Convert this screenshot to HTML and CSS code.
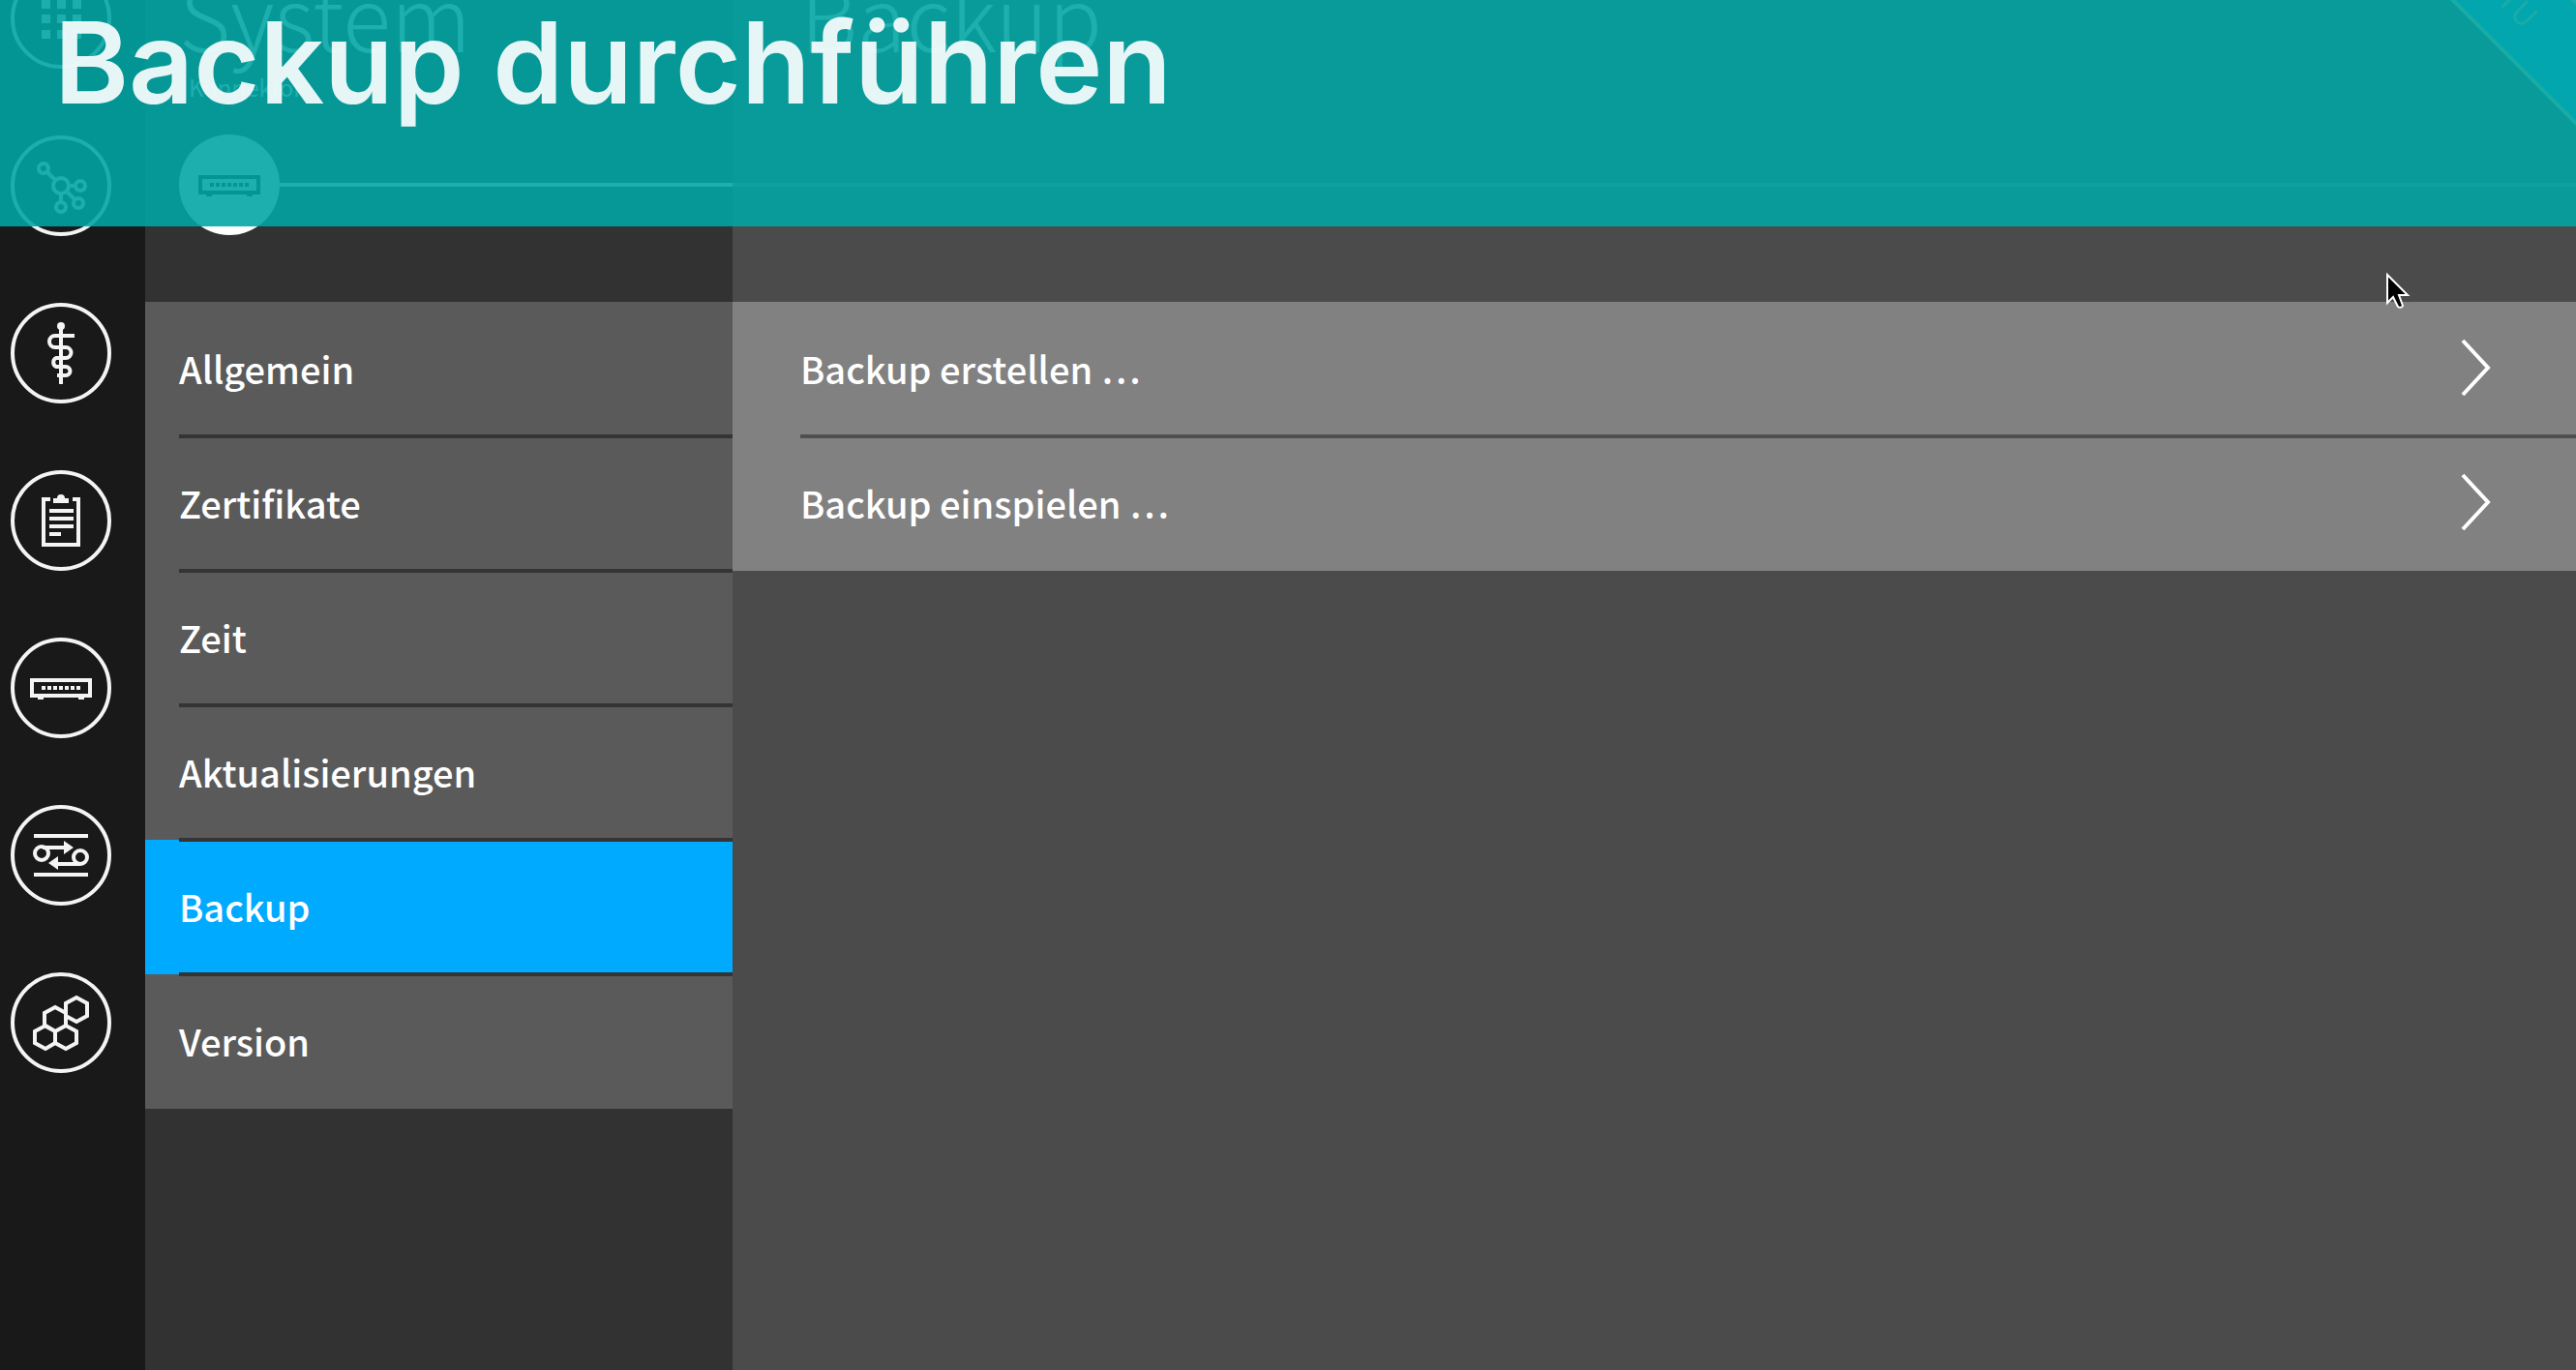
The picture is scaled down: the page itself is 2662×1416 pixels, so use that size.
FILE: index.html
```html
<!DOCTYPE html>
<html lang="de">
<head>
<meta charset="utf-8">
<meta name="viewport" content="width=device-width, initial-scale=1">
<title>Backup durchführen</title>
<link rel="stylesheet" href="styles.css">
</head>
<body>
<div class="app">
  <nav class="rail" aria-label="Hauptnavigation">
    <a class="rail-link" href="#home" aria-label="Übersicht">
      <svg viewBox="0 0 104 104"><circle cx="52" cy="52" r="50"/><path class="solid" d="M32 33h9v9h-9zM48 33h9v9h-9zM64 33h9v9h-9zM32 48h9v9h-9zM48 48h9v9h-9zM64 48h9v9h-9zM32 64h9v9h-9zM48 64h9v9h-9zM64 64h9v9h-9z"/></svg>
    </a>
    <a class="rail-link" href="#netzwerk" aria-label="Netzwerk">
      <svg viewBox="0 0 104 104"><circle cx="52" cy="52" r="50"/><circle cx="52" cy="52" r="8"/><circle cx="34" cy="34" r="5"/><circle cx="72" cy="52" r="5"/><circle cx="70" cy="70" r="5"/><circle cx="52" cy="74" r="5"/><path d="M38 38l8 8M60 52h7M58 58l8 8M52 60v8"/></svg>
    </a>
    <a class="rail-link" href="#praxis" aria-label="Praxis">
      <svg viewBox="0 0 104 104"><circle cx="52" cy="52" r="50"/><circle class="solid" cx="52" cy="24" r="4"/><path d="M52 24v60M66 34H46a6 6 0 0 0 0 12H57a5 5 0 0 1 0 11H47a5 5 0 0 0 0 9H57a4 4 0 0 1 0 9H48"/></svg>
    </a>
    <a class="rail-link" href="#protokolle" aria-label="Protokolle">
      <svg viewBox="0 0 104 104"><circle cx="52" cy="52" r="50"/><path d="M41 30H34V77H70V30H64M40 42H65M40 50H65M40 58H65M40 66H52"/><path class="solid" d="M44 34v-5h4a4 4 0 0 1 8 0h4v5z"/></svg>
    </a>
    <a class="rail-link" href="#system" aria-label="System">
      <svg viewBox="0 0 104 104"><circle cx="52" cy="52" r="50"/><path d="M22 44H82V60H22zM28 62h6M70 62h6"/><path class="dots" d="M32 52H73"/></svg>
    </a>
    <a class="rail-link" href="#module" aria-label="Module">
      <svg viewBox="0 0 104 104"><circle cx="52" cy="52" r="50"/><path d="M24 32H80M24 72H80M33 44H58M72 61H47"/><circle cx="32" cy="50" r="7"/><circle cx="72" cy="54" r="7"/><path class="solid" d="M55 37L65 44L55 51zM49 53L39 60L49 67z"/></svg>
    </a>
    <a class="rail-link" href="#dienste" aria-label="Dienste">
      <svg viewBox="0 0 104 104"><circle cx="52" cy="52" r="50"/><path d="M68 26l11 6v13l-11 6l-11-6V32zM46 36l11 6v13l-11 6l-11-6V42zM36 55l10 6v12l-10 6l-11-6V61zM57 55l11 6v12l-11 6l-11-6V61z"/></svg>
    </a>
  </nav>

  <aside class="panel">
    <header class="head">
      <div class="titles">
        <h2 class="title">System</h2>
        <p class="subtitle">Konnektor</p>
      </div>
      <div class="device">
        <svg class="device-icon" viewBox="0 0 104 104"><circle class="disc" cx="52" cy="52" r="52"/><path d="M22 44H82V60H22zM28 62h6M70 62h6"/><path class="dots" d="M32 52H73"/></svg>
      </div>
    </header>
    <ul class="list">
      <li class="row"><a class="item" href="#allgemein">Allgemein</a></li>
      <li class="row"><a class="item" href="#zertifikate">Zertifikate</a></li>
      <li class="row"><a class="item" href="#zeit">Zeit</a></li>
      <li class="row"><a class="item" href="#aktualisierungen">Aktualisierungen</a></li>
      <li class="row"><a class="item item-active" href="#backup" aria-current="page">Backup</a></li>
      <li class="row"><a class="item" href="#version">Version</a></li>
    </ul>
  </aside>

  <main class="content">
    <header class="head">
      <div class="titles">
        <h2 class="title">Backup</h2>
      </div>
      <div class="rule"></div>
    </header>
    <ul class="list">
      <li class="row"><button class="item" type="button">Backup erstellen …<svg class="chevron" viewBox="0 0 32 60"><path d="M3 2L29 30L3 58"/></svg></button></li>
      <li class="row"><button class="item" type="button">Backup einspielen …<svg class="chevron" viewBox="0 0 32 60"><path d="M3 2L29 30L3 58"/></svg></button></li>
    </ul>
  </main>

  <div class="ribbon"><span class="ribbon-text">TU</span></div>
</div>

<div class="banner"><h1 class="banner-title">Backup durchführen</h1></div>

<svg class="cursor" viewBox="0 0 28 42"><path d="M3 4V33L9 27L14 37Q17 39 19 36L15 25H24z"/></svg>
</body>
</html>
```
FILE: styles.css
```css
* {
  box-sizing: border-box;
}

body {
  margin: 0;
  overflow: hidden;
  background: #4b4b4b;
  color: #fff;
  font-family: "Noto Sans CJK SC", "Noto Sans", sans-serif;
  font-size: 38px;
  font-weight: 500;
}

h1, h2, p, ul {
  margin: 0;
  padding: 0;
}

ul {
  list-style: none;
}

svg {
  display: block;
  fill: none;
  stroke: currentColor;
  stroke-width: 4;
}

.app {
  position: relative;
  display: grid;
  grid-template-columns: 150px 607px 1fr;
  min-height: 100vh;
  overflow: hidden;
}

/* Icon rail, scrolled so that its first entry is cut by the window */
.rail {
  display: flex;
  flex-direction: column;
  gap: 69px;
  padding-left: 11px;
  margin-top: -33px;
  background: #191919;
}

.rail-link {
  width: 104px;
  height: 104px;
  color: #f4f4f4;
}

.solid {
  fill: currentColor;
  stroke: none;
}

.dots {
  stroke-dasharray: 4 2;
}

/* Columns */
.panel {
  background: #323232;
}

.content {
  background: #4b4b4b;
}

.head {
  display: flex;
  flex-direction: column;
  height: 312px;
}

.titles {
  height: 139px;
  padding-left: 35px;
}

.content .titles {
  padding-left: 70px;
}

.title {
  margin-top: -46px;
  font-size: 92px;
  font-weight: 300;
  line-height: 120px;
}

.subtitle {
  padding-left: 10px;
  font-size: 24px;
  font-weight: 400;
  line-height: 32px;
}

.device {
  display: flex;
  align-items: center;
  padding-left: 35px;
}

.device::after {
  flex: 1;
  height: 4px;
  background: #fff;
  content: "";
}

.device-icon {
  width: 104px;
  color: #191919;
}

.disc {
  fill: #fff;
  stroke: none;
}

.rule {
  height: 4px;
  margin-top: 50px;
  background: #737373;
}

/* Lists */
.row {
  position: relative;
  background: #5a5a5a;
}

.content .row {
  background: #818181;
}

.row + .row::before {
  position: absolute;
  top: -2px;
  right: 0;
  left: 35px;
  height: 4px;
  background: #343434;
  content: "";
}

.content .row + .row::before {
  left: 70px;
  background: #4f4f4f;
}

.item {
  display: flex;
  align-items: center;
  justify-content: space-between;
  width: 100%;
  height: 139px;
  padding: 0 88px 3px 35px;
  border: 0;
  background: none;
  color: #fff;
  font: inherit;
  text-align: left;
  text-decoration: none;
}

.content .item {
  padding-left: 70px;
}

.item-active {
  background: #00aaff;
}

.chevron {
  width: 32px;
  height: 60px;
}

/* Environment ribbon across the top right corner */
.ribbon {
  position: absolute;
  top: -40px;
  right: -121px;
  display: flex;
  align-items: center;
  justify-content: center;
  width: 360px;
  height: 92px;
  border: solid #e6d8c0;
  border-width: 4px 0;
  background: #00aaff;
  transform: rotate(45deg);
}

.ribbon-text {
  color: #e6d8c0;
  font-size: 32px;
  font-weight: 400;
  line-height: 40px;
}

/* Caption laid over the application */
.banner {
  position: absolute;
  top: 0;
  right: 0;
  left: 0;
  height: 234px;
  padding: 0 56px;
  background: rgba(1, 165, 164, 0.89);
}

.banner-title {
  color: rgba(255, 255, 255, 0.9);
  font-family: Inter, sans-serif;
  font-size: 117px;
  font-weight: 600;
  line-height: 130px;
}

.cursor {
  position: absolute;
  top: 280px;
  left: 2464px;
  width: 28px;
  height: 42px;
  fill: #000;
  stroke: #fff;
  stroke-width: 2;
}
```
